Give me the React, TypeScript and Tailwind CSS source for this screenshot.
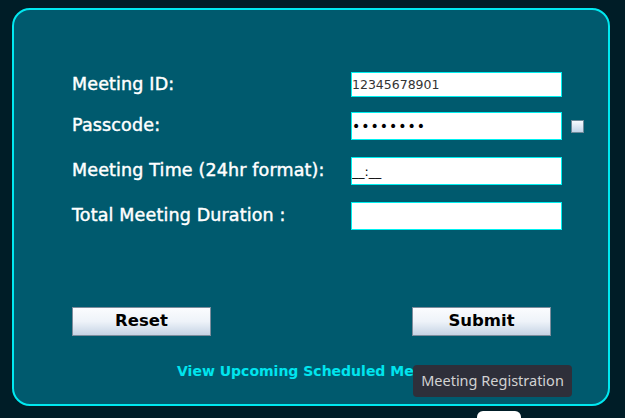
import { useState } from 'react';

const labelFont = { fontFamily: '"DejaVu Sans", sans-serif' };

function Field({ label, children, tall }: { label: string; children: React.ReactNode; tall?: boolean }) {
  return (
    <div className={`flex items-center ${tall ? 'h-[28px]' : 'h-[25px]'}`}>
      <span
        className="w-[279px] text-white text-[17.5px] font-normal leading-none tracking-[0.15px] [-webkit-text-stroke:0.45px_white]"
        style={labelFont}
      >
        {label}
      </span>
      {children}
    </div>
  );
}

export default function App() {
  const [meetingId, setMeetingId] = useState('12345678901');
  const [passcode, setPasscode] = useState('abcdefgh');
  const [time, setTime] = useState('__:__');
  const [duration, setDuration] = useState('');

  const inputCls =
    'h-full w-[211px] bg-white border-[1.5px] border-[#00f0f0] px-0 text-[12.5px] text-[#333] outline-none';

  return (
    <div className="relative w-[625px] h-[418px] overflow-hidden bg-[#001d27] pt-[8px] pl-[12px]">
      {/* Main panel */}
      <div className="w-[598px] h-[398px] rounded-[18px] border-2 border-[#00e8f0] bg-[#005a6e] flex flex-col pl-[58px] pt-[62px]">
        <div className="flex flex-col gap-[15px]">
          <Field label="Meeting ID:">
            <input className={inputCls} style={labelFont} value={meetingId} onChange={(e) => setMeetingId(e.target.value)} />
          </Field>
          <div className="flex flex-col gap-[17px]">
            <Field label="Passcode:" tall>
              <input
                type="password"
                className={`${inputCls} text-black text-[14px] tracking-[1px]`}
                style={labelFont}
                value={passcode}
                onChange={(e) => setPasscode(e.target.value)}
              />
              <span className="ml-[9px] w-[13px] h-[13px] border border-[#6f8a99] bg-gradient-to-b from-[#f8fbff] to-[#c3d4e8]" />
            </Field>
            <Field label="Meeting Time (24hr format):" tall>
              <input className={`${inputCls} text-black`} style={labelFont} value={time} onChange={(e) => setTime(e.target.value)} />
            </Field>
            <Field label="Total Meeting Duration :" tall>
              <input className={inputCls} style={labelFont} value={duration} onChange={(e) => setDuration(e.target.value)} />
            </Field>
          </div>
        </div>

        <div className="flex gap-[201px] mt-[77px]">
          <button
            className="w-[139px] h-[29px] border border-[#7d8c9c] bg-gradient-to-b from-[#fbfcfe] via-[#eef3f9] to-[#c6d4e5] text-black text-[16.5px] font-bold"
            style={labelFont}
            onClick={() => {
              setMeetingId('');
              setPasscode('');
              setTime('__:__');
              setDuration('');
            }}
          >
            Reset
          </button>
          <button
            className="w-[139px] h-[29px] border border-[#7d8c9c] bg-gradient-to-b from-[#fbfcfe] via-[#eef3f9] to-[#c6d4e5] text-black text-[16.5px] font-bold"
            style={labelFont}
          >
            Submit
          </button>
        </div>

        <div className="mt-[22px] pl-[105px]">
          <span className="text-[#00e5ee] text-[14px] font-bold whitespace-nowrap" style={labelFont}>
            View Upcoming Scheduled Meetings
          </span>
        </div>
      </div>

      {/* Tooltip */}
      <div
        className="absolute left-[413px] top-[365px] w-[159px] h-[32px] rounded-[4px] bg-[#2e2f3a] flex items-center justify-center text-[14.5px] text-[#d2d2d2]"
        style={{ fontFamily: '"Noto Sans", sans-serif' }}
      >
        Meeting Registration
      </div>

      {/* Partially visible element below */}
      <div className="absolute left-[477px] top-[411px] w-[44px] h-[20px] rounded-[6px] bg-white" />
    </div>
  );
}
